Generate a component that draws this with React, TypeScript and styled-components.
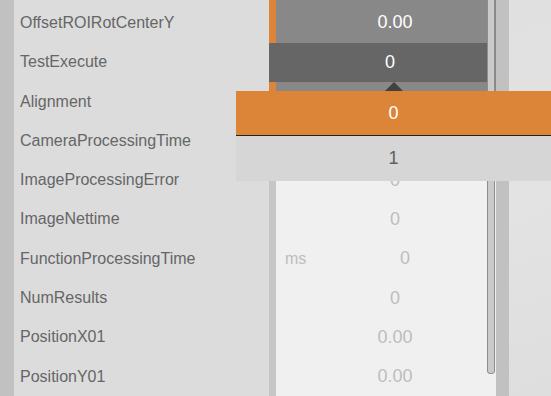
import { FC } from 'react';
import styled, { createGlobalStyle } from 'styled-components';

interface Param {
  name: string;
  value: string;
  unit?: string;
  active?: boolean;
  editing?: boolean;
}

const params: Param[] = [
  { name: 'OffsetROIRotCenterX', value: '0.00', active: true },
  { name: 'OffsetROIRotCenterY', value: '0.00', active: true },
  { name: 'TestExecute', value: '0', active: true, editing: true },
  { name: 'Alignment', value: '0', active: true },
  { name: 'CameraProcessingTime', value: '0' },
  { name: 'ImageProcessingError', value: '0' },
  { name: 'ImageNettime', value: '0' },
  { name: 'FunctionProcessingTime', value: '0', unit: 'ms' },
  { name: 'NumResults', value: '0' },
  { name: 'PositionX01', value: '0.00' },
  { name: 'PositionY01', value: '0.00' },
];

const options = ['0', '1'];

const GlobalStyle = createGlobalStyle`
  html, body {
    margin: 0;
    padding: 0;
    background: #e1e1e1;
    font-family: "Liberation Sans", Arial, sans-serif;
  }
`;

export const ParamRow: FC<{ param: Param }> = ({ param }) => (
  <Row>
    <Label>{param.name}</Label>
    <Marker $active={param.active} />
    <ValueCell $active={param.active}>
      {param.unit && <Unit>{param.unit}</Unit>}
      <Value $active={param.active} $withUnit={!!param.unit}>
        {param.value}
      </Value>
    </ValueCell>
    {param.editing && (
      <Editor>
        {param.value}
        <Caret />
      </Editor>
    )}
  </Row>
);

const App: FC = () => {
  return (
    <>
      <GlobalStyle />
      <Page>
        <LeftEdge />
        <Table>
          {params.map(p => (
            <ParamRow key={p.name} param={p} />
          ))}
          <ScrollThumb />
        </Table>
        <Gutter />
        <Backdrop />
        <Dropdown>
          {options.map((o, i) => (
            <Option key={o} $selected={i === 0}>
              {o}
            </Option>
          ))}
        </Dropdown>
      </Page>
    </>
  );
};

export default App;

const Page = styled.div`
  position: relative;
  display: flex;
  width: 551px;
  height: 396px;
  overflow: hidden;
`;

const LeftEdge = styled.div`
  width: 14px;
  flex-shrink: 0;
  background: #c1c1c1;
`;

const Table = styled.div`
  position: relative;
  width: 482px;
  flex-shrink: 0;
  display: flex;
  flex-direction: column;
  margin-top: -36px;
  background: #f0f0f0;
`;

const Row = styled.div`
  position: relative;
  display: grid;
  grid-template-columns: 255px 7px 1fr;
  height: 39.3px;
  flex-shrink: 0;
`;

const Label = styled.div`
  display: flex;
  align-items: center;
  padding-left: 6px;
  background: #dcdcdc;
  color: #666666;
  font-size: 16px;
  white-space: nowrap;
`;

const Marker = styled.div<{ $active?: boolean }>`
  background: ${p => (p.$active ? '#dc8538' : '#c6c6c6')};
`;

const ValueCell = styled.div<{ $active?: boolean }>`
  display: flex;
  align-items: center;
  padding-left: 18px;
  background: ${p => (p.$active ? '#888888' : '#f0f0f0')};
`;

const Unit = styled.span`
  width: 21px;
  margin-left: -9px;
  color: #bdbdbd;
  font-size: 16px;
`;

const Value = styled.span<{ $active?: boolean; $withUnit?: boolean }>`
  flex: 1;
  text-align: center;
  padding-left: ${p => (p.$withUnit ? '8px' : '0')};
  color: ${p => (p.$active ? '#ffffff' : '#bdbdbd')};
  font-size: 18px;
`;

const Editor = styled.div`
  position: absolute;
  left: 255px;
  top: 0.4px;
  width: 218px;
  height: 39px;
  display: flex;
  align-items: center;
  justify-content: center;
  box-sizing: border-box;
  padding-left: 24px;
  background: #666666;
  color: #ffffff;
  font-size: 18px;
  z-index: 2;
`;

const Caret = styled.div`
  position: absolute;
  top: 100%;
  left: 116px;
  width: 0;
  height: 0;
  border-left: 9px solid transparent;
  border-right: 9px solid transparent;
  border-bottom: 9px solid #414141;
  transform: rotate(180deg) scaleY(-1);
`;

const ScrollThumb = styled.div`
  position: absolute;
  left: 473px;
  top: 0;
  width: 8px;
  height: 410px;
  box-sizing: border-box;
  border: 1px solid #8d8d8d;
  border-radius: 0 0 3px 3px;
  background: #cacaca;
  z-index: 3;
`;

const Gutter = styled.div`
  width: 13px;
  flex-shrink: 0;
  background: #c1c1c1;
`;

const Backdrop = styled.div`
  flex: 1;
  background: linear-gradient(160deg, #e0e0e0 0%, #e3e3e3 50%, #dedede 100%);
`;

const Dropdown = styled.div`
  position: absolute;
  left: 236px;
  top: 91px;
  width: 315px;
  display: flex;
  flex-direction: column;
  z-index: 5;
`;

const Option = styled.div<{ $selected?: boolean }>`
  height: ${p => (p.$selected ? '44px' : '45px')};
  display: flex;
  align-items: center;
  justify-content: center;
  font-size: 18px;
  background: ${p => (p.$selected ? '#dc8538' : '#d6d6d6')};
  color: ${p => (p.$selected ? '#ffffff' : '#606060')};
  border-bottom: ${p => (p.$selected ? '1px solid #222222' : 'none')};
`;
